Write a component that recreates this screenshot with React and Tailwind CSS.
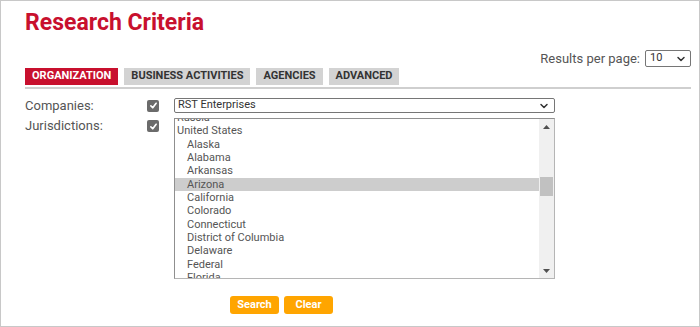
import { ChevronDown } from 'lucide-react';

const states = [
  { name: 'Russia', indent: false },
  { name: 'United States', indent: false },
  { name: 'Alaska', indent: true },
  { name: 'Alabama', indent: true },
  { name: 'Arkansas', indent: true },
  { name: 'Arizona', indent: true, selected: true },
  { name: 'California', indent: true },
  { name: 'Colorado', indent: true },
  { name: 'Connecticut', indent: true },
  { name: 'District of Columbia', indent: true },
  { name: 'Delaware', indent: true },
  { name: 'Federal', indent: true },
  { name: 'Florida', indent: true },
  { name: 'Georgia', indent: true },
];

const tabs = ['ORGANIZATION', 'BUSINESS ACTIVITIES', 'AGENCIES', 'ADVANCED'];

function Check() {
  return (
    <span className="flex size-[12px] items-center justify-center rounded-[2px] bg-[#6b6b6b]">
      <svg width="9" height="9" viewBox="0 0 12 12" fill="none" stroke="white" strokeWidth="2.2" strokeLinecap="round" strokeLinejoin="round" aria-hidden>
        <polyline points="2.5 6.5 5 9 9.5 3" />
      </svg>
    </span>
  );
}

export default function App() {
  return (
    <div className="box-border h-[327px] w-[700px] overflow-hidden border border-[#c8c8c8] bg-white pl-6 pr-2 pt-2 font-['Roboto',sans-serif]">
      <h1 className="text-[23px] font-bold leading-[27px] text-[#c8102e]">Research Criteria</h1>

      <div className="mt-[14px] flex h-[17px] items-center justify-end gap-[5px]">
        <span className="text-[13px] text-[#555]">Results per page:</span>
        <div className="flex h-[17px] w-[46px] items-center justify-between rounded-[2px] border border-[#767676] pl-[4px] pr-[3px] text-[11px] text-[#333]">
          <span>10</span>
          <ChevronDown size={12} strokeWidth={3} className="text-[#333]" />
        </div>
      </div>

      <div className="mt-[1px] flex gap-[6px]">
        {tabs.map((t, i) => (
          <div
            key={t}
            className={`flex h-[17px] items-center px-[7px] text-[11px] font-bold ${i === 0 ? 'bg-[#c8102e] text-white' : 'bg-[#d3d3d3] text-[#333]'}`}
          >
            {t}
          </div>
        ))}
      </div>
      <div className="mt-[2px] h-[2px] bg-[#cfcfcf]" />

      <div className="mt-[9px] flex items-center">
        <span className="w-[122px] text-[13px] leading-[15px] text-[#555]">Companies:</span>
        <Check />
        <div className="ml-[15px] flex h-[15px] w-[381px] items-center justify-between rounded-[2px] border border-[#767676] pl-[3px] pr-[4px] text-[11px] text-[#333]">
          <span>RST Enterprises</span>
          <ChevronDown size={12} strokeWidth={3} className="text-[#333]" />
        </div>
      </div>

      <div className="mt-[5px] flex items-start">
        <span className="h-[15px] w-[122px] text-[13px] leading-[15px] text-[#555]">Jurisdictions:</span>
        <div className="pt-[2px]">
          <Check />
        </div>
        <div className="ml-[15px] flex h-[161px] w-[381px] overflow-hidden border border-[#8f8f8f] border-b-[#b5b5b5] border-r-[#b5b5b5]">
          <div className="flex-1 overflow-hidden">
            <div className="-mt-[8px]">
              {states.map(s => (
                <div
                  key={s.name}
                  className={`h-[13.33px] text-[11px] leading-[13.33px] text-[#555] ${s.indent ? 'pl-[12px]' : 'pl-[2px]'} ${s.selected ? 'bg-[#cdcdcd] text-[#333]' : ''}`}
                >
                  {s.name}
                </div>
              ))}
            </div>
          </div>
          <div className="flex w-[15px] flex-col bg-[#f0f0f0]">
            <div className="flex h-[15px] items-center justify-center">
              <svg width="7" height="4" viewBox="0 0 7 4" aria-hidden><polygon points="3.5 0 7 4 0 4" fill="#505050" /></svg>
            </div>
            <div className="mx-[1px] mt-[43px] h-[19px] bg-[#c1c1c1]" />
            <div className="flex-1" />
            <div className="flex h-[15px] items-center justify-center">
              <svg width="7" height="4" viewBox="0 0 7 4" aria-hidden><polygon points="0 0 7 0 3.5 4" fill="#505050" /></svg>
            </div>
          </div>
        </div>
      </div>

      <div className="ml-[205px] mt-[17px] flex gap-[5px]">
        <button className="h-[18px] w-[49px] rounded-[3px] bg-[#ffa500] text-[11px] font-bold text-white">Search</button>
        <button className="h-[18px] w-[49px] rounded-[3px] bg-[#ffa500] text-[11px] font-bold text-white">Clear</button>
      </div>
    </div>
  );
}
